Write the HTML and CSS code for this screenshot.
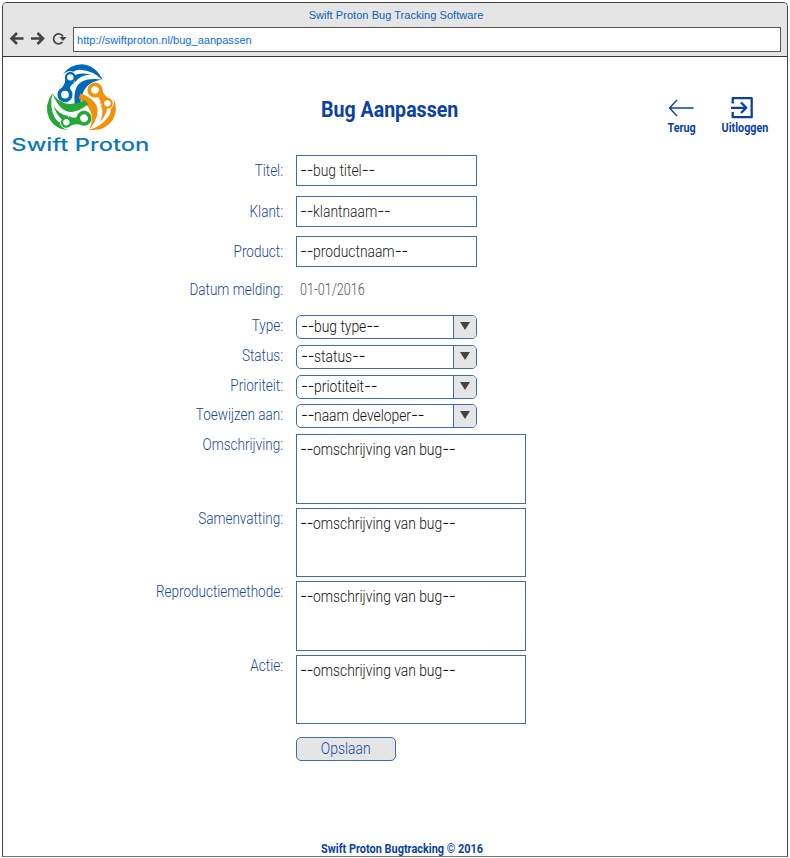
FILE: index.html
```html
<!DOCTYPE html>
<html lang="nl">
<head>
<meta charset="utf-8">
<title>Swift Proton Bug Tracking Software</title>
<link rel="stylesheet" href="styles.css">
</head>
<body>
<div class="window">
  <header class="chrome">
    <div class="window-title">Swift Proton Bug Tracking Software</div>
    <div class="toolbar">
      <svg class="nav-icons" width="64" height="20" viewBox="0 0 64 20" fill="none" stroke="#444" stroke-width="2.600">
        <path d="M15.500 8.500H3M9 3L3.500 8.500l5.500 5.500"/>
        <path d="M23 8.500h12M29.500 3l5.500 5.500-5.500 5.500"/>
        <path stroke-width="1.700" d="M54.500 12A5 5 0 1 1 55 6.500"/>
        <path fill="#444" stroke="none" d="M51.500 7h7L55 11z"/>
      </svg>
      <div class="address">http://swiftproton.nl/bug_aanpassen</div>
    </div>
  </header>

  <section class="banner">
    <svg class="logo" width="140" height="96" viewBox="30 25 420 288">
      <defs>
        <g id="strand">
          <path stroke="none" d="M188 60Q208 30 246 29Q289 33 308 77Q280 47 240 45Q228 45 220 51Q206 44 188 60z"/>
          <path stroke="none" d="M225 152C219 104 228 64 307 75C268 80 246 98 241 150z"/>
          <path stroke="none" d="M222 62Q244 52 272 60Q240 60 224 84z"/>
          <path stroke="none" d="M196 70Q196 93 178 106L210 107Q206 94 224 84z"/>
          <circle cx="211" cy="68" r="13" fill="#fff" stroke-width="7"/>
          <circle cx="195" cy="120" r="17" fill="#fff" stroke-width="11"/>
        </g>
      </defs>
      <use href="#strand" class="blue"/>
      <use href="#strand" class="orange" transform="rotate(120 244 139)"/>
      <use href="#strand" class="green" transform="rotate(240 244 139)"/>
      <text class="wordmark" x="34" y="290" textLength="414" lengthAdjust="spacingAndGlyphs">Swift Proton</text>
    </svg>
    <h1>Bug Aanpassen</h1>
    <nav class="actions">
      <a class="action">
        <svg class="back" width="26" height="24" viewBox="0 0 26 24" fill="none" stroke="#0a41a5" stroke-width="1.400"><path d="M25.500 13H1.500M9 5L1.500 13 9 21"/></svg>
        <span>Terug</span>
      </a>
      <a class="action">
        <svg class="exit" width="24" height="24" viewBox="0 0 24 24" fill="none" stroke="#0a41a5" stroke-width="2.300" stroke-linejoin="round"><path d="M2.700 8.500V3.200h19v19h-19V17M1 12.800h14M11 7.500l5.300 5.300L11 18"/></svg>
        <span>Uitloggen</span>
      </a>
    </nav>
  </section>

  <main class="form">
    <div class="row line"><label>Titel:</label><div class="field"><span><i>--</i>bug titel<i>--</i></span></div></div>
    <div class="row line"><label>Klant:</label><div class="field"><span><i>--</i>klantnaam<i>--</i></span></div></div>
    <div class="row line"><label>Product:</label><div class="field"><span><i>--</i>productnaam<i>--</i></span></div></div>
    <div class="row fixed"><label>Datum melding:</label><div class="date">01-01/2016</div></div>
    <div class="row pick"><label>Type:</label><div class="select"><span><i>--</i>bug type<i>--</i></span><b></b></div></div>
    <div class="row pick"><label>Status:</label><div class="select"><span><i>--</i>status<i>--</i></span><b></b></div></div>
    <div class="row pick"><label>Prioriteit:</label><div class="select"><span><i>--</i>priotiteit<i>--</i></span><b></b></div></div>
    <div class="row pick"><label>Toewijzen aan:</label><div class="select"><span><i>--</i>naam developer<i>--</i></span><b></b></div></div>
    <div class="row area"><label>Omschrijving:</label><div class="textarea"><span><i>--</i>omschrijving van bug<i>--</i></span></div></div>
    <div class="row area"><label>Samenvatting:</label><div class="textarea"><span><i>--</i>omschrijving van bug<i>--</i></span></div></div>
    <div class="row area"><label>Reproductiemethode:</label><div class="textarea"><span><i>--</i>omschrijving van bug<i>--</i></span></div></div>
    <div class="row area"><label>Actie:</label><div class="textarea"><span><i>--</i>omschrijving van bug<i>--</i></span></div></div>
    <button class="save"><span>Opslaan</span></button>
  </main>

  <footer><span>Swift Proton Bugtracking © 2016</span></footer>
</div>
</body>
</html>
```
FILE: styles.css
```css
* { box-sizing: border-box; }
body { margin: 0; background: #fff; font-family: Roboto, "Liberation Sans", sans-serif; font-weight: 300; font-size: 16px; }
.window { width: 786px; height: 855px; margin: 2px; border: 1px solid #444; border-bottom: 1px solid #777; border-radius: 5px 5px 0 0; display: flex; flex-direction: column; overflow: hidden; }
.chrome { height: 54px; flex: none; background: #e5e5e5; border-bottom: 1px solid #333; padding-top: 5px; font: 11px/14px "Liberation Sans", sans-serif; }
.window-title { text-align: center; color: #0a64b4; letter-spacing: 0.05px; padding-left: 2px; }
.toolbar { display: flex; align-items: center; padding: 5px 6px 0 5px; }
.nav-icons { flex: none; margin: 0 1px 0 0; }
.address { flex: 1; height: 25px; border: 1px solid #555; background: #fff; color: #0a6ee6; padding: 5px 3px 0; letter-spacing: 0.03px; }

.banner { height: 98px; flex: none; display: grid; grid-template-columns: 308px 1fr 120px; }
.logo { margin: 6px 0 0 7px; overflow: visible; }
.blue { fill: #0069b8; stroke: #0069b8; }
.orange { fill: #f39208; stroke: #f39208; }
.green { fill: #25a83a; stroke: #25a83a; }
.wordmark { font: 500 52px Inter, sans-serif; fill: #0a78be; }
h1 { margin: 39px 0 0 10px; font-size: 22px; line-height: 28px; font-weight: 700; color: #0a41a5; white-space: nowrap; transform: scaleX(0.89); transform-origin: left; }
.actions { display: flex; justify-content: space-between; padding: 38px 16px 0 0; margin-left: -1px; color: #0a41a5; font-size: 12px; font-weight: 700; line-height: 15px; }
.action { display: flex; flex-direction: column; align-items: center; gap: 2px; }
.action span { transform: scaleX(0.9); }
.back { margin-right: 1px; }
.exit { margin-right: 5px; }

.form { flex: none; height: 632px; }
.row { display: flex; color: #17479e; line-height: 20px; white-space: nowrap; }
.row label { width: 280px; margin-right: 13px; flex: none; text-align: right; transform: scaleX(0.845); transform-origin: right; }
.line { height: 40.5px; }
.line label { padding-top: 6px; }
.field, .select, .textarea { border: 1px solid #3c6cb8; background: #fff; color: #222; display: flex; }
.field span, .select span, .textarea span { transform: scaleX(0.865); transform-origin: left; height: 20px; }
.field { width: 181px; height: 31px; padding: 5px 3px; }
.fixed { height: 38.5px; padding-top: 3px; }
.date { padding-left: 4px; color: #555; transform: scaleX(0.79); transform-origin: 4px 50%; }
.pick { height: 29.8px; }
.pick label { padding-top: 1px; }
.select { width: 181px; height: 24px; border-radius: 5px; padding: 1px 0 0 4px; overflow: hidden; color: #111; }
.select b { width: 23px; margin: -1px 0 0 auto; height: 22px; background: #e5e5e5; border-left: 1px solid #3c6cb8; display: grid; place-items: center; }
.select b::before { content: ""; border: 5px solid transparent; border-top: 8px solid #444; border-bottom: 0; margin-top: -2px; }
.area { height: 73.6px; }
.area label { padding-top: 1px; }
.textarea { width: 230px; height: 69.500px; padding: 5px 3px; color: #111; }
i { font: 300 18px/16px Inter, sans-serif; letter-spacing: -0.6px; }
.save { display: block; width: 100px; height: 24px; margin: 8px 0 0 293px; padding: 0; border: 1px solid #3c6cb8; border-radius: 5px; background: #e5e5e5; color: #17479e; font: 300 16px/21px Roboto, sans-serif; }
.save span { display: inline-block; transform: scaleX(0.87); }
footer { margin-top: auto; height: 16px; text-align: center; font-size: 12px; line-height: 18px; font-weight: 700; color: #0a41a5; padding-left: 14px; }
footer span { display: inline-block; transform: scaleX(0.91); }
```
